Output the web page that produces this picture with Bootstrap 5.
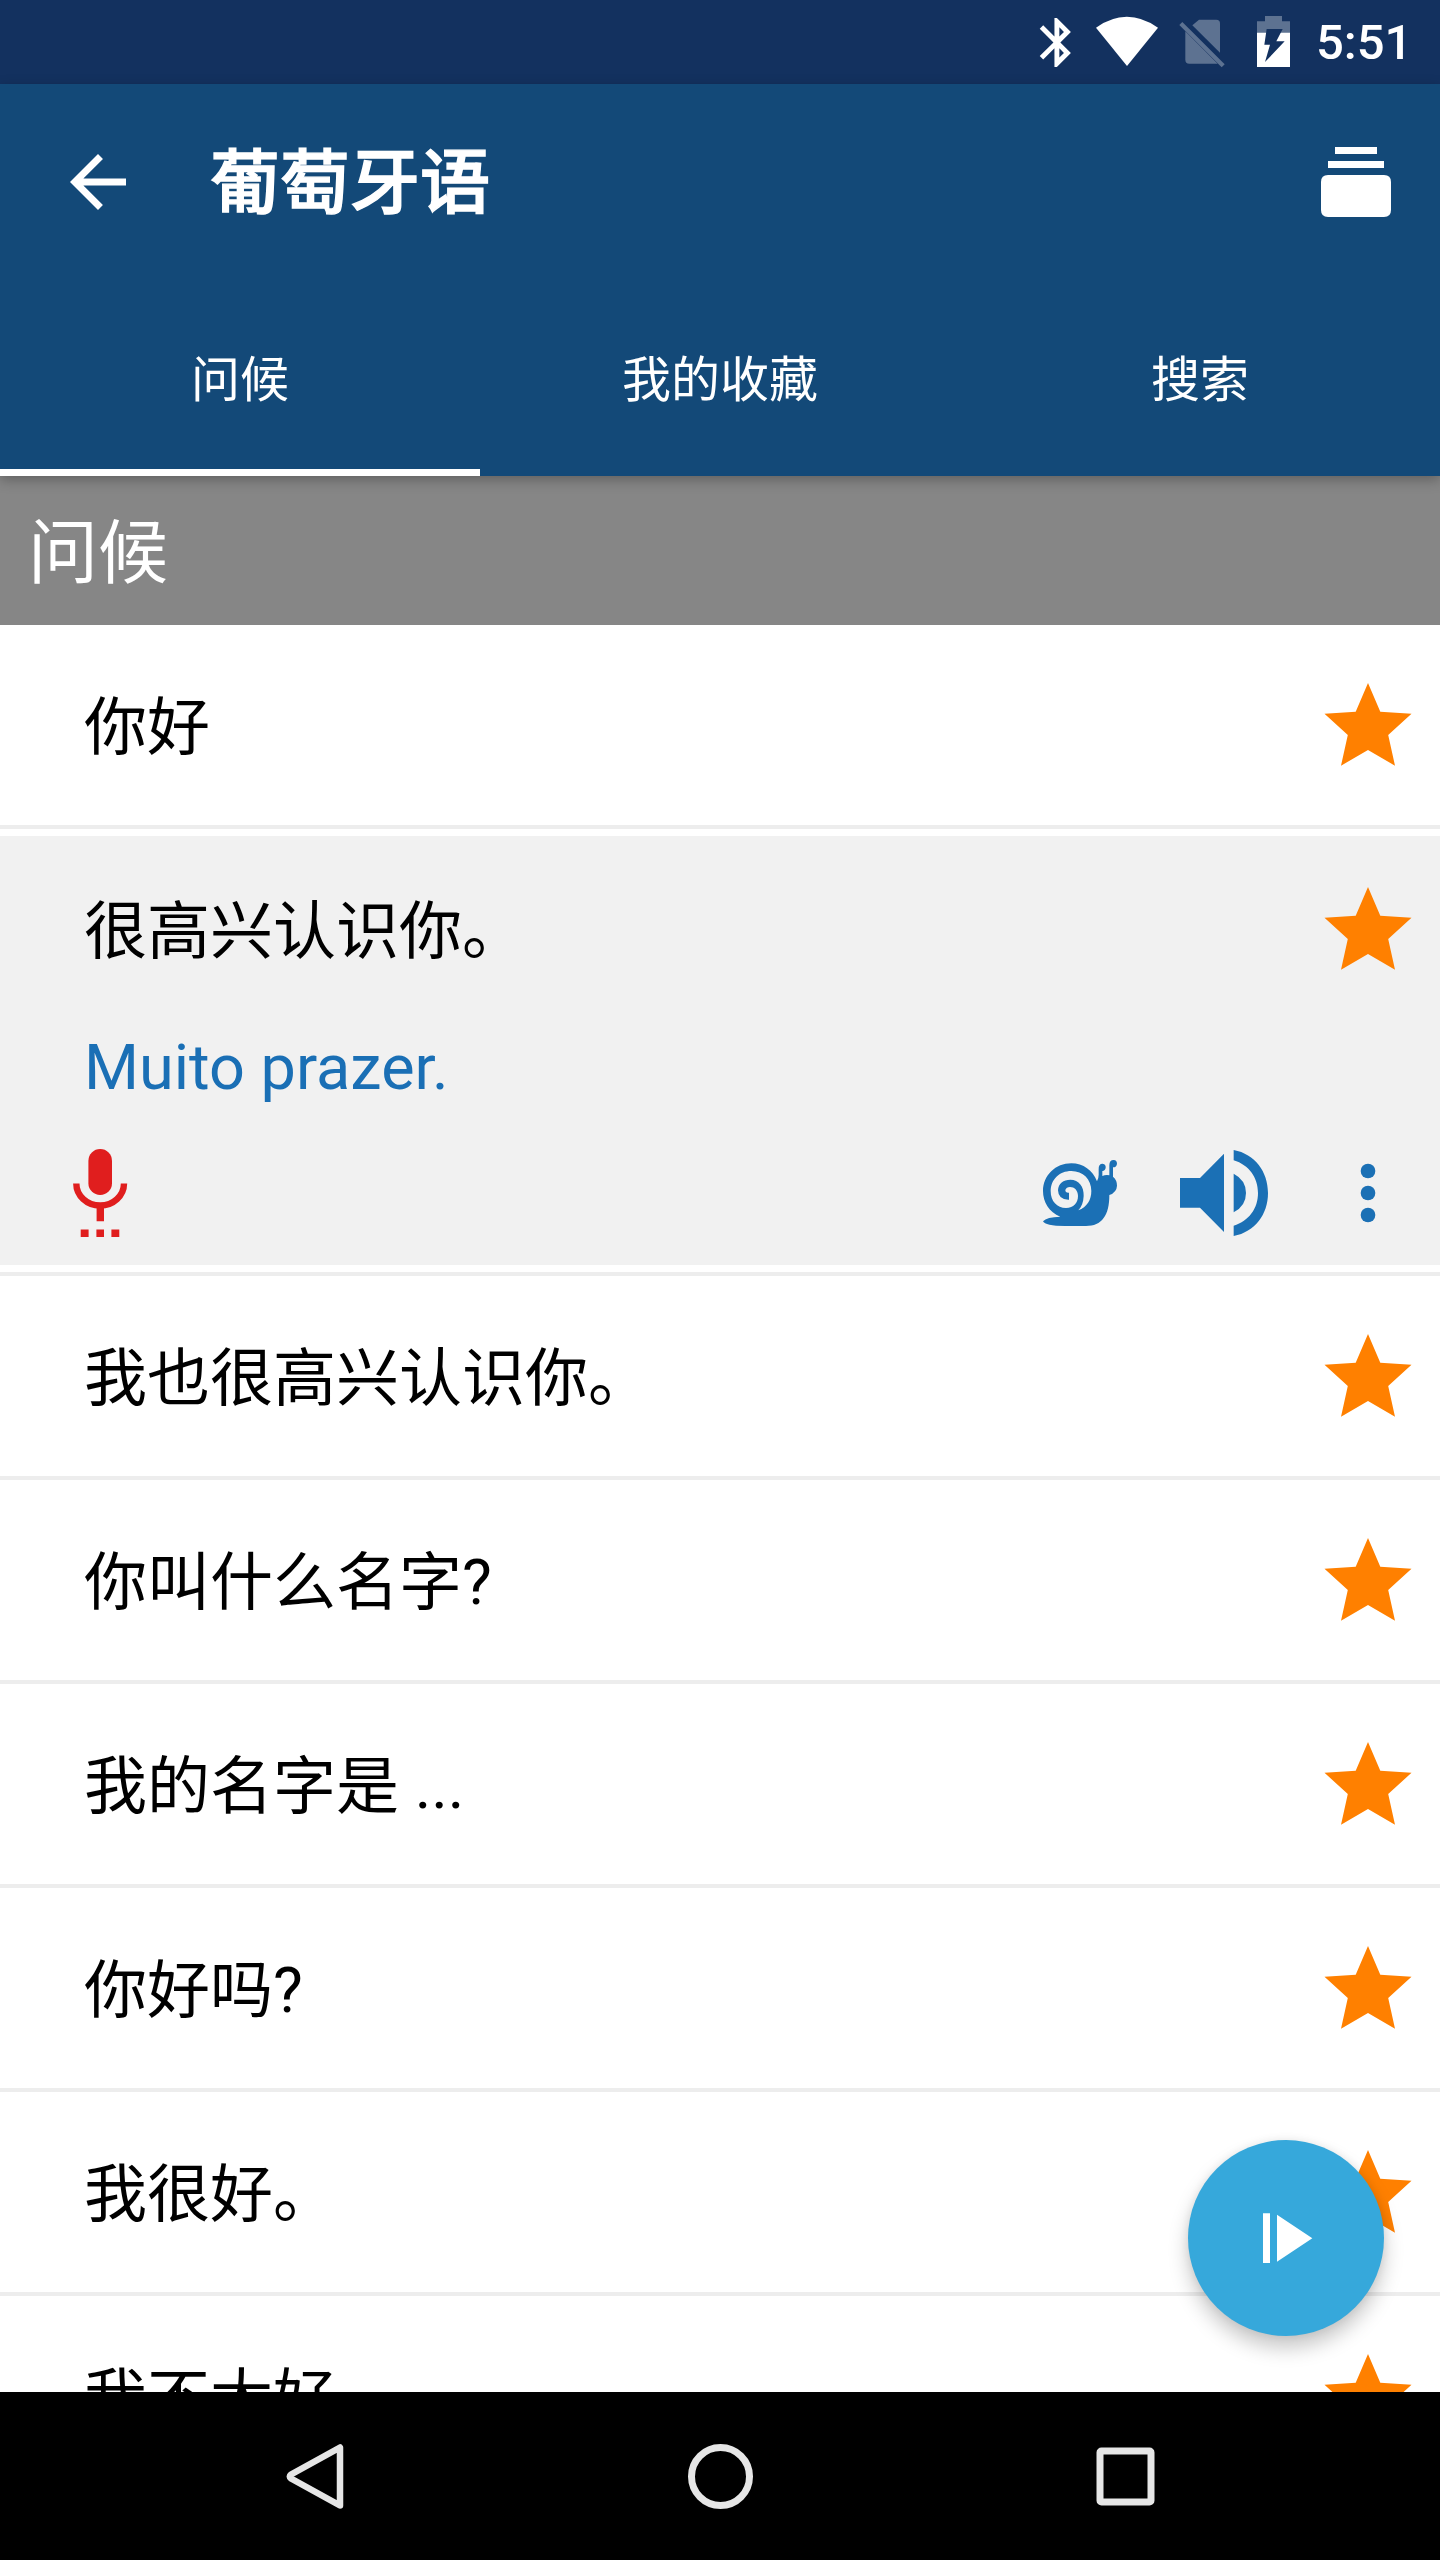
<!DOCTYPE html>
<html lang="zh-CN">
<head>
<meta charset="utf-8">
<meta name="viewport" content="width=device-width, initial-scale=1">
<title>葡萄牙语</title>
<link href="https://cdn.jsdelivr.net/npm/bootstrap@5.3.0/dist/css/bootstrap.min.css" rel="stylesheet">
<style>
  body { font-family: Roboto, "Noto Sans CJK SC", sans-serif; color: #000; background: #fff; }
  svg { display: block; flex: none; }
  .screen { width: 1440px; height: 2560px; }
  .status { height: 84px; background: #13315f; padding-right: 33px; }
  .clock { font-size: 49px; font-weight: 500; line-height: 86px; width: 91px; white-space: nowrap; }
  .appbar { background: #134978; height: 392px; z-index: 2; box-shadow: 0 4px 12px rgba(0,0,0,.28); }
  .toolbar-top { height: 196px; padding: 0 42px 0 56px; }
  .title { font-size: 70px; font-weight: 500; line-height: 84px; margin-left: 70px; padding-top: 4px; -webkit-text-stroke: 1.4px #fff; }
  .tabs .nav-link { height: 196px; line-height: 196px; font-size: 49px; color: #fff; border-radius: 0; padding: 3px 0 0; }
  .tabs .nav-link.active { box-shadow: inset 0 -7px #fff; }
  .section-head { height: 149px; background: #868686; font-size: 70px; line-height: 151px; padding: 3px 0 0 28px; }
  .phrase { height: 204px; border: 0; border-bottom: 4px solid #ededed; border-radius: 0; padding: 0 28px 0 84px; font-size: 63px; }
  .phrase span { padding-top: 6px; }
  .phrase-open { height: 447px; padding: 7px 0; }
  .open-body { height: 429px; background: #f1f1f1; }
  .open-top { height: 186px; padding: 0 28px 0 84px; }
  .translation { color: #1a6fb5; line-height: 74px; padding: 9px 0 0 84px; }
  .actions { height: 145px; padding: 0 28px 0 70px; margin-top: 15px; }
  .fab { width: 196px; height: 196px; right: 56px; top: 2140px; z-index: 3; background: #36a8db; box-shadow: 0 12px 20px rgba(0,0,0,.22), 0 0 8px rgba(0,0,0,.07); }
  .sysnav { height: 168px; background: #000; padding: 0 113px; z-index: 2; }
</style>
</head>
<body>
<svg width="0" height="0" class="position-absolute">
  <symbol id="star" viewBox="0 0 88 84"><path fill="#ff8000" d="M44 0 56.3 28.8 87.5 30.8 64.2 52 71 82.7 44 67 17 82.7 23.8 52 .5 30.8 31.7 28.8z"/></symbol>
</svg>
<div class="screen d-flex flex-column overflow-hidden position-relative">
  <div class="status d-flex justify-content-end text-white flex-shrink-0">
    <svg width="50" height="84" viewBox="30 0 150 252"><path transform="translate(22.5 39) scale(7.35)" fill="#fff" d="M17.71 7.71 12 2h-1v7.59L6.41 5 5 6.41 10.59 12 5 17.59 6.41 19 11 14.41V22h1l5.71-5.71L13.41 12zM13 5.83l1.88 1.88L13 9.59zm1.88 10.46L13 18.17v-3.76z"/></svg>
    <svg width="80" height="84" viewBox="180 0 240 252"><path fill="#fff" d="M228 83Q320 18 414 83L321 198z"/></svg>
    <svg width="80" height="84" viewBox="420 0 240 252"><g fill="#5d7291"><path d="M537 59h52q11 0 11 11v88L517 76z"/><path d="M496 94 593 191H508q-12 0-12-12z"/><path d="M487 66 614 193 605 202 478 75z"/></g></svg>
    <svg width="76" height="84" viewBox="660 0 228 252"><path fill="#5d7291" d="M735 48h51v16h24v35h-99V64h24z"/><path fill="#fff" d="M711 98h99v103h-99z"/><path fill="#13315f" d="M740 87h48l-19 37h25l-59 62 15-52h-17z"/></svg>
    <div class="clock">5:51</div>
  </div>

  <header class="appbar flex-shrink-0 position-relative text-white">
    <div class="toolbar-top d-flex align-items-center">
      <svg width="84" height="84" viewBox="0 0 24 24"><path fill="#fff" d="M20 11H7.83l5.59-5.59L12 4l-8 8 8 8 1.41-1.41L7.83 13H20z"/></svg>
      <div class="title">葡萄牙语</div>
      <svg class="ms-auto" width="84" height="84" viewBox="0 0 84 84"><path fill="#fff" d="M21 7h42v7H21zM14 21h56v7H14zM14 35h56q7 0 7 7v28q0 7-7 7H14q-7 0-7-7V42q0-7 7-7z"/></svg>
    </div>
    <nav class="tabs nav nav-fill row g-0">
      <a class="nav-link col-4 active">问候</a>
      <a class="nav-link col-4">我的收藏</a>
      <a class="nav-link col-4">搜索</a>
    </nav>
  </header>

  <main class="flex-grow-1 overflow-hidden">
    <div class="section-head text-white">问候</div>
    <div class="list-group list-group-flush">
      <div class="phrase d-flex align-items-center justify-content-between"><span>你好</span><svg width="88" height="84"><use href="#star"/></svg></div>
      <div class="phrase phrase-open">
        <div class="open-body">
          <div class="open-top d-flex align-items-center justify-content-between"><span>很高兴认识你。</span><svg width="88" height="84"><use href="#star"/></svg></div>
          <div class="translation">Muito prazer.</div>
          <div class="actions d-flex align-items-center">
            <svg width="60" height="92" viewBox="70 1147 60 92" fill="#e01e1e"><rect x="88.4" y="1149" width="23.6" height="46" rx="11.8"/><path d="M76.3 1183.5A23.8 22 0 0 0 124 1183.5" fill="none" stroke="#e01e1e" stroke-width="6.4"/><path d="M96.6 1205h7.4v16.3h-7.4zM80.7 1229.4h7.9v7.6h-7.9zM96.4 1229.4h7.6v7.6h-7.6zM111.4 1229.4h7.9v7.6h-7.9z"/></svg>
            <svg class="ms-auto" width="80" height="92" viewBox="60 81 240 276">
              <g fill="#1b70b5">
                <path d="M69 304Q80 291 121 290C87 276 69 246 69 213C69 166 107 130 154 130C190 130 218 151 231 184Q236 174 236 164V148Q235 131 248 131Q258 133 257 143Q256 152 247 153V168Q257 164 268 166V136Q268 120 281 120Q291 121 291 131Q290 142 279 142V170Q291 180 291 197Q290 217 268 225C268 286 246 318 198 318H135Q75 318 69 304z"/>
              </g>
              <path fill="#f1f1f1" d="M175 271C201 261 214 240 214 213C214 178 189 153 154 153C118 153 92 179 92 213C92 244 111 264 138 264C161 264 174 248 174 228C174 211 163 201 150 201Q139 201 136 210Q136 219 147 218V239Q115 240 114 211C115 190 130 179 151 179C177 179 192 200 191 228C190 247 185 260 175 271z"/>
            </svg>
            <svg width="150" height="92" viewBox="300 81 450 276" fill="#1b70b5"><path d="M480 174h60l72-73v235l-72-73h-60zM641 90C705 102 744 155 744 219S705 336 641 348V317C687 303 714 265 714 219S687 135 641 121zM641 161Q678 180 678 219T641 277z"/></svg>
            <svg class="me-5" width="94" height="92" viewBox="750 81 282 276" overflow="visible" fill="#1b70b5"><circle cx="1044" cy="153" r="22"/><circle cx="1044" cy="219" r="22"/><circle cx="1044" cy="285" r="22"/></svg>
          </div>
        </div>
      </div>
      <div class="phrase d-flex align-items-center justify-content-between"><span>我也很高兴认识你。</span><svg width="88" height="84"><use href="#star"/></svg></div>
      <div class="phrase d-flex align-items-center justify-content-between"><span>你叫什么名字?</span><svg width="88" height="84"><use href="#star"/></svg></div>
      <div class="phrase d-flex align-items-center justify-content-between"><span>我的名字是 ...</span><svg width="88" height="84"><use href="#star"/></svg></div>
      <div class="phrase d-flex align-items-center justify-content-between"><span>你好吗?</span><svg width="88" height="84"><use href="#star"/></svg></div>
      <div class="phrase d-flex align-items-center justify-content-between"><span>我很好。</span><svg width="88" height="84"><use href="#star"/></svg></div>
      <div class="phrase d-flex align-items-center justify-content-between"><span>我不太好</span><svg width="88" height="84"><use href="#star"/></svg></div>
    </div>
  </main>

  <button class="fab position-absolute rounded-circle border-0 p-0" aria-label="play">
    <svg width="196" height="196" viewBox="84 120 588 588"><path fill="#fff" d="M309 340h21v149h-21zM351 344 457 414.500 351 485z"/></svg>
  </button>

  <footer class="sysnav row g-0 flex-shrink-0 align-items-center text-center">
    <div class="col d-flex justify-content-center"><svg width="72" height="72" viewBox="0 0 72 72"><path d="M61 7.500V65.500L12 38.500Q9.500 36.500 12 34.500z" fill="none" stroke="#e6e6e6" stroke-width="6.500" stroke-linejoin="round"/></svg></div>
    <div class="col d-flex justify-content-center"><svg width="72" height="72" viewBox="0 0 72 72"><circle cx="36.500" cy="36.500" r="29" fill="none" stroke="#e6e6e6" stroke-width="7"/></svg></div>
    <div class="col d-flex justify-content-center"><svg width="72" height="72" viewBox="0 0 72 72"><rect x="11" y="11" width="51" height="51" rx="1.500" fill="none" stroke="#e6e6e6" stroke-width="7"/></svg></div>
  </footer>
</div>
<script src="https://cdn.jsdelivr.net/npm/bootstrap@5.3.0/dist/js/bootstrap.bundle.min.js"></script>
</body>
</html>
